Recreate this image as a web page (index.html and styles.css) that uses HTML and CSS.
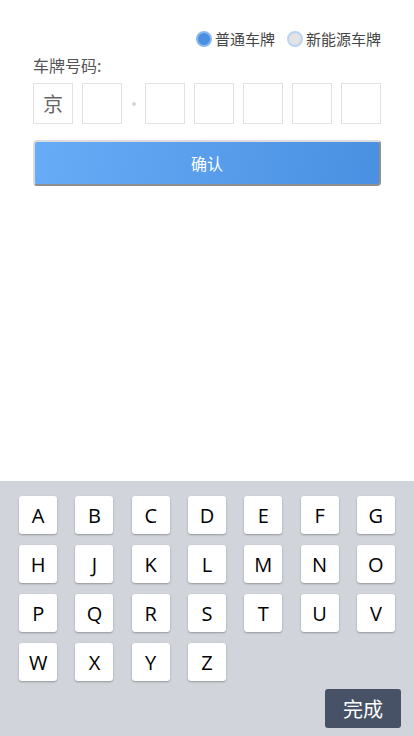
FILE: index.html
```html
<!DOCTYPE html>
<html lang="zh">
<head>
<meta charset="utf-8">
<link rel="stylesheet" href="styles.css">
</head>
<body>
<div class="page">
  <div class="form">
    <div class="types">
      <label class="type"><span class="radio checked"></span>普通车牌</label>
      <label class="type"><span class="radio"></span>新能源车牌</label>
    </div>
    <div class="label">车牌号码:</div>
    <div class="plate">
      <div class="cell">京</div>
      <div class="cell"></div>
      <div class="dot"></div>
      <div class="cell"></div>
      <div class="cell"></div>
      <div class="cell"></div>
      <div class="cell"></div>
      <div class="cell"></div>
    </div>
    <button class="confirm">确认</button>
  </div>
  <div class="keyboard">
    <div class="keys">
      <div class="k"><span>A</span></div><div class="k"><span>B</span></div><div class="k"><span>C</span></div><div class="k"><span>D</span></div><div class="k"><span>E</span></div><div class="k"><span>F</span></div><div class="k"><span>G</span></div>
      <div class="k"><span>H</span></div><div class="k"><span>J</span></div><div class="k"><span>K</span></div><div class="k"><span>L</span></div><div class="k"><span>M</span></div><div class="k"><span>N</span></div><div class="k"><span>O</span></div>
      <div class="k"><span>P</span></div><div class="k"><span>Q</span></div><div class="k"><span>R</span></div><div class="k"><span>S</span></div><div class="k"><span>T</span></div><div class="k"><span>U</span></div><div class="k"><span>V</span></div>
      <div class="k"><span>W</span></div><div class="k"><span>X</span></div><div class="k"><span>Y</span></div><div class="k"><span>Z</span></div>
    </div>
    <div class="done-row"><button class="done">完成</button></div>
  </div>
</div>
</body>
</html>
```
FILE: styles.css
```css
* { box-sizing: border-box; }
html, body { margin: 0; padding: 0; }
body {
  font-family: "Noto Sans CJK SC", "Noto Sans", sans-serif;
  background: #fff;
  color: #333;
}
.page {
  height: 736px;
  display: flex;
  flex-direction: column;
}
.form {
  padding: 31px 33px 0 33px;
}
.types {
  display: flex;
  justify-content: flex-end;
  gap: 12px;
  height: 16px;
}
.type {
  display: flex;
  align-items: center;
  font-size: 15px;
  color: #444;
  line-height: 16px;
}
.radio {
  width: 16px;
  height: 16px;
  border-radius: 50%;
  border: 2px solid #b9d3f3;
  background: #e3e3e3;
  margin-right: 3px;
}
.radio.checked {
  background: #4a8fe0;
  border-color: #8ab8ee;
}
.label {
  margin-top: 9px;
  font-size: 16px;
  line-height: 18px;
  color: #555;
}
.plate {
  display: flex;
  align-items: center;
  gap: 9px;
  margin-top: 9px;
}
.cell {
  width: 40px;
  height: 41px;
  border: 1px solid #e2e2e2;
  display: flex;
  align-items: center;
  justify-content: center;
  font-size: 20px;
  color: #666;
}
.dot {
  width: 4px;
  height: 4px;
  border-radius: 50%;
  background: #d6d6d6;
  margin: 0 0.5px;
}
.confirm {
  display: block;
  width: 348px;
  height: 46px;
  margin-top: 16px;
  border-radius: 4px;
  border: 2px solid;
  border-color: #dcdcdc #8f8f8f #8f8f8f #dcdcdc;
  background: linear-gradient(100deg, #66acf6 0%, #4a90e2 100%);
  color: #fff;
  font-family: "Noto Sans CJK SC", sans-serif;
  font-size: 16px;
  padding: 0;
}
.keyboard {
  margin-top: auto;
  height: 255px;
  background: #d1d5db;
  padding: 15px 10px 8px 10px;
  display: flex;
  flex-direction: column;
}
.keys {
  display: grid;
  grid-template-columns: repeat(7, 1fr);
  grid-auto-rows: 38px;
  row-gap: 11px;
}
.k {
  display: flex;
  justify-content: center;
}
.k span {
  width: 38px;
  height: 38px;
  background: #fff;
  border-radius: 3px;
  box-shadow: 0 1px 2px rgba(0,0,0,0.3);
  display: flex;
  align-items: center;
  justify-content: center;
  font-family: "Open Sans", "Noto Sans", sans-serif;
  font-size: 20px;
  color: #000;
}
.done-row {
  margin-top: auto;
  display: flex;
  justify-content: flex-end;
  padding-right: 3px;
}
.done {
  width: 76px;
  height: 39px;
  border: none;
  border-radius: 3px;
  background: #475266;
  color: #fff;
  font-family: "Noto Sans CJK SC", sans-serif;
  font-size: 20px;
  padding: 0;
}
```
